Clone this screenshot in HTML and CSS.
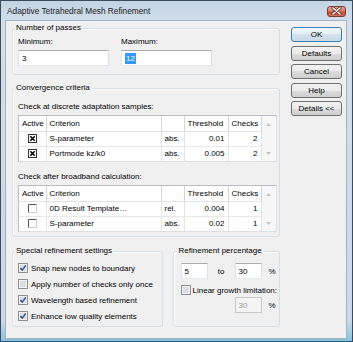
FILE: index.html
```html
<!DOCTYPE html>
<html>
<head>
	<title>Adaptive Tetrahedral Mesh Refinement</title>
	<link rel="stylesheet" href="styles.css">
</head>
<body>
<div class="window">
	<div class="titlebar">
		<span class="title">Adaptive Tetrahedral Mesh Refinement</span>
		<span class="close">
			<svg width="11" height="8" viewBox="0 0 11 8"><path d="M2 1 L9 7 M9 1 L2 7" stroke="#5a2a22" stroke-width="3" stroke-linecap="round"/><path d="M2 1 L9 7 M9 1 L2 7" stroke="#fff" stroke-width="1.6" stroke-linecap="round"/></svg>
		</span>
	</div>
	<div class="client">
		<div class="main">
			<div class="group passes">
				<div class="group-title">Number of passes</div>
				<div class="pass-row">
					<div class="pass-field">
						<div class="caption">Minimum:</div>
						<div class="textbox">3</div>
					</div>
					<div class="pass-field">
						<div class="caption">Maximum:</div>
						<div class="textbox"><span class="selected">12</span></div>
					</div>
				</div>
			</div>

			<div class="group criteria">
				<div class="group-title">Convergence criteria</div>
				<div class="subtitle first">Check at discrete adaptation samples:</div>
				<div class="listview">
					<table class="grid">
						<tr>
							<th class="c-active">Active</th>
							<th class="c-crit">Criterion</th>
							<th class="c-type"></th>
							<th class="c-thr">Threshold</th>
							<th class="c-chk">Checks</th>
						</tr>
						<tr>
							<td class="c-active"><svg class="xbox" width="9" height="9" viewBox="0 0 9 9"><rect x=".5" y=".5" width="8" height="8" fill="#fff" stroke="#333"/><path d="M2.3 2.3 L6.7 6.7 M6.7 2.3 L2.3 6.7" stroke="#000" stroke-width="1.6"/></svg></td>
							<td>S-parameter</td>
							<td>abs.</td>
							<td class="num">0.01</td>
							<td class="num">2</td>
						</tr>
						<tr>
							<td class="c-active"><svg class="xbox" width="9" height="9" viewBox="0 0 9 9"><rect x=".5" y=".5" width="8" height="8" fill="#fff" stroke="#333"/><path d="M2.3 2.3 L6.7 6.7 M6.7 2.3 L2.3 6.7" stroke="#000" stroke-width="1.6"/></svg></td>
							<td>Portmode kz/k0</td>
							<td>abs.</td>
							<td class="num">0.005</td>
							<td class="num">2</td>
						</tr>
					</table>
					<div class="scroll">
						<svg width="5" height="3" viewBox="0 0 5 3"><path d="M0 3 L2.5 0 L5 3Z" fill="#c4c4c4"/></svg>
						<svg width="5" height="3" viewBox="0 0 5 3"><path d="M0 0 L2.5 3 L5 0Z" fill="#c4c4c4"/></svg>
					</div>
				</div>

				<div class="subtitle second">Check after broadband calculation:</div>
				<div class="listview">
					<table class="grid">
						<tr>
							<th class="c-active">Active</th>
							<th class="c-crit">Criterion</th>
							<th class="c-type"></th>
							<th class="c-thr">Threshold</th>
							<th class="c-chk">Checks</th>
						</tr>
						<tr>
							<td class="c-active"><svg class="xbox" width="9" height="9" viewBox="0 0 9 9"><path d="M.5 8.5 V.5 H8.5" fill="none" stroke="#555"/><path d="M8.5 1 V8.5 H1" fill="none" stroke="#ccc"/><rect x="1" y="1" width="7" height="7" fill="#fff"/></svg></td>
							<td>0D Result Template…</td>
							<td>rel.</td>
							<td class="num">0.004</td>
							<td class="num">1</td>
						</tr>
						<tr>
							<td class="c-active"><svg class="xbox" width="9" height="9" viewBox="0 0 9 9"><path d="M.5 8.5 V.5 H8.5" fill="none" stroke="#555"/><path d="M8.5 1 V8.5 H1" fill="none" stroke="#ccc"/><rect x="1" y="1" width="7" height="7" fill="#fff"/></svg></td>
							<td>S-parameter</td>
							<td>abs.</td>
							<td class="num">0.02</td>
							<td class="num">1</td>
						</tr>
					</table>
					<div class="scroll">
						<svg width="5" height="3" viewBox="0 0 5 3"><path d="M0 3 L2.5 0 L5 3Z" fill="#c4c4c4"/></svg>
						<svg width="5" height="3" viewBox="0 0 5 3"><path d="M0 0 L2.5 3 L5 0Z" fill="#c4c4c4"/></svg>
					</div>
				</div>
			</div>

			<div class="bottom-row">
				<div class="group special">
					<div class="group-title">Special refinement settings</div>
					<div class="checks">
						<div class="check-row"><svg class="cb" width="10" height="10" viewBox="0 0 10 10"><rect x=".5" y=".5" width="9" height="9" fill="#f3f3f3" stroke="#8e8f8f"/><rect x="2" y="2" width="6" height="6" fill="#d9dee5"/><path d="M2.4 5 L4.2 7.2 L7.8 2.4" fill="none" stroke="#2d4a8a" stroke-width="1.4"/></svg><span>Snap new nodes to boundary</span></div>
						<div class="check-row"><svg class="cb" width="10" height="10" viewBox="0 0 10 10"><rect x=".5" y=".5" width="9" height="9" fill="#f3f3f3" stroke="#8e8f8f"/><rect x="2" y="2" width="6" height="6" fill="#d9dee5"/></svg><span>Apply number of checks only once</span></div>
						<div class="check-row"><svg class="cb" width="10" height="10" viewBox="0 0 10 10"><rect x=".5" y=".5" width="9" height="9" fill="#f3f3f3" stroke="#8e8f8f"/><rect x="2" y="2" width="6" height="6" fill="#d9dee5"/><path d="M2.4 5 L4.2 7.2 L7.8 2.4" fill="none" stroke="#2d4a8a" stroke-width="1.4"/></svg><span>Wavelength based refinement</span></div>
						<div class="check-row"><svg class="cb" width="10" height="10" viewBox="0 0 10 10"><rect x=".5" y=".5" width="9" height="9" fill="#f3f3f3" stroke="#8e8f8f"/><rect x="2" y="2" width="6" height="6" fill="#d9dee5"/><path d="M2.4 5 L4.2 7.2 L7.8 2.4" fill="none" stroke="#2d4a8a" stroke-width="1.4"/></svg><span>Enhance low quality elements</span></div>
					</div>
				</div>

				<div class="group percent">
					<div class="group-title">Refinement percentage</div>
					<div class="pct-row">
						<div class="textbox small">5</div>
						<span class="to">to</span>
						<div class="textbox small">30</div>
						<span class="unit">%</span>
					</div>
					<div class="check-row linear"><svg class="cb" width="10" height="10" viewBox="0 0 10 10"><rect x=".5" y=".5" width="9" height="9" fill="#f3f3f3" stroke="#8e8f8f"/><rect x="2" y="2" width="6" height="6" fill="#d9dee5"/></svg><span>Linear growth limitation:</span></div>
					<div class="pct-row limit">
						<div class="textbox small disabled">30</div>
						<span class="unit">%</span>
					</div>
				</div>
			</div>
		</div>

		<div class="buttons">
			<div class="btn default">OK</div>
			<div class="btn">Defaults</div>
			<div class="btn">Cancel</div>
			<div class="btn">Help</div>
			<div class="btn">Details &lt;&lt;</div>
		</div>
	</div>
</div>
</body>
</html>
```

FILE: styles.css
```css
body{
	margin: 0;
	font-family: "Liberation Sans", Arial, sans-serif;
	font-size: 8px;
	color: #000;
}

.window{
	width: 353px;
	height: 342px;
	box-sizing: border-box;
	display: flex;
	flex-direction: column;
	border: 1px solid #3b4a5c;
	border-bottom-color: #2d5a74;
	padding: 0 5px 2px 4px;
	background: linear-gradient(to bottom, #c3d3e4 0, #d2dfec 20px, #cbd9e8 320px, #86c3dc 100%);
}

.titlebar{
	height: 19px;
	display: flex;
	align-items: center;
	justify-content: space-between;
	padding-left: 2px;
}
.title{
	font-size: 8.3px;
	color: #1b1b1b;
}
.close{
	width: 19px;
	height: 11px;
	margin-right: 1px;
	margin-top: 1px;
	box-sizing: border-box;
	border: 1px solid #7d3a2e;
	border-radius: 3px;
	background: linear-gradient(to bottom, #e9a99b 0%, #d98170 45%, #c24a34 55%, #d0705a 100%);
	display: flex;
	align-items: center;
	justify-content: center;
}

.client{
	flex: 1;
	display: flex;
	gap: 11px;
	background: #f0f0f0;
	border: 1px solid #a3b3c4;
	padding: 6px 4px 0 6px;
}

.main{
	width: 268px;
	margin-top: 1px;
}

/* group boxes */
.group{
	border: 1px solid #d5dfe5;
	border-radius: 3px;
	box-shadow: inset 1px 1px 0 #fff;
	padding: 0 2px 0 5px;
}
.group-title{
	width: fit-content;
	margin: -7px 0 0 -4px;
	padding: 0 2px;
	line-height: 12px;
	background: #f0f0f0;
	white-space: nowrap;
}

.passes{
	padding-bottom: 8px;
}
.pass-row{
	display: flex;
	gap: 12px;
}
.caption{
	margin-top: 2px;
	line-height: 12px;
}
.textbox{
	width: 91px;
	height: 16px;
	margin-top: 2px;
	box-sizing: border-box;
	border: 1px solid #abadb3;
	border-left-color: #e2e3ea;
	border-right-color: #dbdfe6;
	border-bottom-color: #e3e9ef;
	background: #fff;
	padding: 0 3px;
	display: flex;
	align-items: center;
}
.selected{
	background: #3399ff;
	color: #fff;
	padding: 1px 1px;
}

.criteria{
	margin-top: 13px;
	padding-bottom: 4px;
}
.subtitle{
	line-height: 12px;
}
.subtitle.first{
	margin-top: 7px;
}
.subtitle.second{
	margin-top: 9px;
}

.listview{
	display: flex;
	margin-top: 2px;
	border: 1px solid #a0a0a0;
	border-color: #b9bcc2 #dcdfe4 #dcdfe4 #b9bcc2;
	background: #fff;
}
.grid{
	border-collapse: collapse;
	table-layout: fixed;
	width: 242px;
}
.grid th, .grid td{
	height: 15px;
	padding: 0 3px;
	box-sizing: border-box;
	border-right: 1px solid #e3e3e3;
	border-bottom: 1px solid #e8e8e8;
	text-align: left;
	font-weight: normal;
	white-space: nowrap;
	overflow: hidden;
}
.grid th{
	border-right-color: #d5d5d5;
	border-bottom-color: #e3e3e3;
}
.grid tr:last-child td{
	border-bottom: none;
}
.grid .num{
	text-align: right;
}
.grid td.c-active{
	text-align: center;
}
.c-active{ width: 27px; }
.c-crit{ width: 115px; }
.c-type{ width: 23px; }
.c-thr{ width: 44px; }
.c-chk{ width: 33px; }
.xbox{
	display: block;
	margin: 0 auto;
}
.scroll{
	flex: 1;
	background: #f7f7f7;
	display: flex;
	flex-direction: column;
	align-items: center;
	justify-content: space-between;
	padding: 7px 0 6px;
}

.bottom-row{
	display: flex;
	gap: 10px;
	margin-top: 14px;
}
.special{
	width: 154px;
	box-sizing: border-box;
	padding-bottom: 2px;
}
.checks{
	margin-top: 3px;
}
.check-row{
	height: 16px;
	display: flex;
	align-items: center;
	gap: 3px;
	white-space: nowrap;
}
.percent{
	flex: 1;
	padding-left: 7px;
}
.pct-row{
	display: flex;
	align-items: center;
	margin-top: 6px;
}
.textbox.small{
	width: 27px;
	margin-top: 0;
}
.to{
	width: 27px;
	text-align: center;
}
.unit{
	margin-left: 7px;
}
.linear{
	margin-top: 5px;
	height: 12px;
	gap: 2px;
}
.limit{
	margin-top: 1px;
	padding-left: 54px;
}
.textbox.disabled{
	background: #f4f4f4;
	border-color: #c9c9c9;
	color: #9a9a9a;
}

/* dialog buttons */
.buttons{
	width: 51px;
	display: flex;
	flex-direction: column;
	gap: 3.5px;
}
.btn{
	height: 15px;
	box-sizing: border-box;
	border: 1px solid #707070;
	border-radius: 3px;
	background: linear-gradient(to bottom, #f2f2f2 0%, #ebebeb 50%, #dddddd 50%, #cfcfcf 100%);
	text-align: center;
	line-height: 13px;
}
.btn.default{
	border-color: #3c7fb1;
	background: linear-gradient(to bottom, #f1f7fb 0%, #e4eef5 50%, #d4e2ec 50%, #c8d9e5 100%);
}
```
